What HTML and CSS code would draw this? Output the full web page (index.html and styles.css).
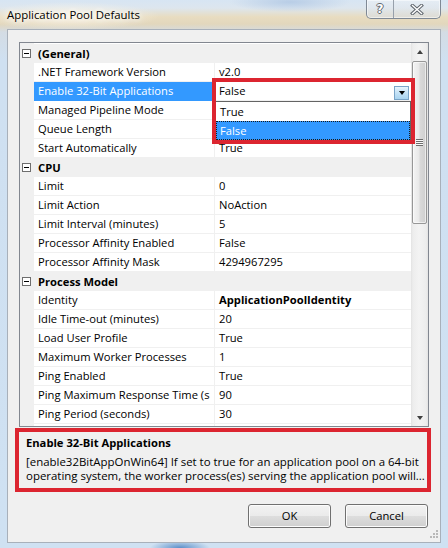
FILE: index.html
```html
<!DOCTYPE html>
<html>
<head>
<meta charset="utf-8">
<link rel="stylesheet" href="styles.css">
</head>
<body>
<div class="window">
  <div class="titlebar">
    <span class="title">Application Pool Defaults</span>
    <div class="caption">
      <div class="capbtn helpbtn"><span class="q">?</span></div>
      <div class="capbtn closebtn">
        <svg width="14" height="11" viewBox="0 0 14 11"><path d="M2.5 1.5 L11.5 9.5 M11.5 1.5 L2.5 9.5" stroke="#62686f" stroke-width="3.4" stroke-linecap="square" fill="none"/><path d="M2.5 1.5 L11.5 9.5 M11.5 1.5 L2.5 9.5" stroke="#ffffff" stroke-width="1.4" stroke-linecap="square" fill="none"/></svg>
      </div>
    </div>
  </div>
  <div class="client">
    <div class="grid">
      <div class="rows">
        <div class="row cat"><span class="box"></span>(General)</div>
        <div class="row"><span class="gut"></span><span class="name">.NET Framework Version</span><span class="val">v2.0</span></div>
        <div class="row sel"><span class="gut"></span><span class="name">Enable 32-Bit Applications</span><span class="val combo"><span class="ctext">False</span><span class="dropbtn"><span class="tri-down"></span></span></span></div>
        <div class="row"><span class="gut"></span><span class="name">Managed Pipeline Mode</span><span class="val"></span></div>
        <div class="row"><span class="gut"></span><span class="name">Queue Length</span><span class="val"></span></div>
        <div class="row"><span class="gut"></span><span class="name">Start Automatically</span><span class="val">True</span></div>
        <div class="row cat"><span class="box"></span>CPU</div>
        <div class="row"><span class="gut"></span><span class="name">Limit</span><span class="val">0</span></div>
        <div class="row"><span class="gut"></span><span class="name">Limit Action</span><span class="val">NoAction</span></div>
        <div class="row"><span class="gut"></span><span class="name">Limit Interval (minutes)</span><span class="val">5</span></div>
        <div class="row"><span class="gut"></span><span class="name">Processor Affinity Enabled</span><span class="val">False</span></div>
        <div class="row"><span class="gut"></span><span class="name">Processor Affinity Mask</span><span class="val">4294967295</span></div>
        <div class="row cat"><span class="box"></span>Process Model</div>
        <div class="row"><span class="gut"></span><span class="name">Identity</span><span class="val bold">ApplicationPoolIdentity</span></div>
        <div class="row"><span class="gut"></span><span class="name">Idle Time-out (minutes)</span><span class="val">20</span></div>
        <div class="row"><span class="gut"></span><span class="name">Load User Profile</span><span class="val">True</span></div>
        <div class="row"><span class="gut"></span><span class="name">Maximum Worker Processes</span><span class="val">1</span></div>
        <div class="row"><span class="gut"></span><span class="name">Ping Enabled</span><span class="val">True</span></div>
        <div class="row"><span class="gut"></span><span class="name">Ping Maximum Response Time (s</span><span class="val">90</span></div>
        <div class="row"><span class="gut"></span><span class="name">Ping Period (seconds)</span><span class="val">30</span></div>
        <div class="row"><span class="gut"></span><span class="name"></span><span class="val"></span></div>
      </div>
      <div class="sb">
        <div class="sb-btn"><span class="tri-up"></span></div>
        <div class="thumb"><span class="grip-lines"></span></div>
        <div class="track"></div>
        <div class="sb-btn"><span class="tri-down small"></span></div>
      </div>
      <div class="dropdown">
        <div class="item">True</div>
        <div class="item on">False</div>
      </div>
      <div class="mark"></div>
    </div>
    <div class="help">
      <div class="help-title">Enable 32-Bit Applications</div>
      <div class="help-desc">[enable32BitAppOnWin64] If set to true for an application pool on a 64-bit<br>operating system, the worker process(es) serving the application pool will...</div>
    </div>
    <div class="actions">
      <div class="btn">OK</div>
      <div class="btn">Cancel</div>
    </div>
    <svg class="sizegrip" width="11" height="11" viewBox="0 0 11 11">
      <g fill="#b8b8b8"><rect x="8" y="0" width="2" height="2"/><rect x="5" y="3" width="2" height="2"/><rect x="8" y="3" width="2" height="2"/><rect x="2" y="6" width="2" height="2"/><rect x="5" y="6" width="2" height="2"/><rect x="8" y="6" width="2" height="2"/></g>
    </svg>
  </div>
</div>
</body>
</html>
```

FILE: styles.css
```css
* { box-sizing: border-box; }
html, body { margin: 0; padding: 0; }
body {
  width: 448px;
  height: 548px;
  overflow: hidden;
  font-family: "Open Sans", "Noto Sans", sans-serif;
  font-size: 11.2px;
  color: #000;
  background:
    radial-gradient(ellipse 30px 8px at 180px 548px, #5c8fc8 0%, rgba(92,143,200,0) 100%),
    radial-gradient(ellipse 60px 10px at 290px 2px, #b8cde6 0%, rgba(184,205,230,0) 100%),
    radial-gradient(ellipse 90px 14px at 70px 16px, #fbf5e6 0%, rgba(251,245,230,0) 100%),
    linear-gradient(to bottom, #d7e5f3 0px, #dde6ee 8px, #e8dcc0 17px, #e2d7bd 24px, #d4dce4 32px, #cfe0f1 60px, #cfe1f2 100%);
}

.window {
  height: 548px;
  display: flex;
  flex-direction: column;
  padding: 0 7px 5px 7px;
}

.titlebar {
  height: 29px;
  flex-shrink: 0;
  display: flex;
  align-items: flex-start;
}
.title {
  margin-top: 6px;
  line-height: 18px;
  font-size: 11.4px;
  text-shadow: 0 0 5px #fffdf4, 0 0 9px #fffdf4, 0 0 12px #fffaf0;
}
.caption {
  margin-left: auto;
  display: flex;
  height: 19px;
  width: 75px;
  border: 1px solid #7f8995;
  border-top: 0;
  border-radius: 0 0 5px 5px;
  overflow: hidden;
  background: linear-gradient(to bottom, rgba(240,243,246,0.55), rgba(226,231,236,0.45) 50%, rgba(214,220,228,0.6));
  box-shadow: inset 0 0 0 1px rgba(255,255,255,0.5);
}
.capbtn {
  height: 18px;
  display: flex;
  align-items: center;
  justify-content: center;
}
.helpbtn {
  width: 27px;
  border-right: 1px solid #97a0ab;
}
.closebtn { flex: 1; }
.q {
  font-family: "DejaVu Sans", sans-serif;
  font-weight: bold;
  font-size: 12px;
  line-height: 14px;
  color: #ffffff;
  text-shadow: -1px 0 0 #62686f, 1px 0 0 #62686f, 0 -1px 0 #62686f, 0 1px 0 #62686f;
}

.client {
  flex: 1;
  position: relative;
  background: #f0f0f0;
  border: 1px solid #a8b0ba;
  padding: 12px 11px 0 11px;
  display: flex;
  flex-direction: column;
}

.grid {
  position: relative;
  height: 385px;
  flex-shrink: 0;
  display: flex;
  border: 1px solid #828790;
  background: #fff;
}
.rows {
  width: 391px;
  padding-top: 1px;
  overflow: hidden;
  background: linear-gradient(to right, #f0f0f0 14px, #fff 14px);
}
.row {
  display: grid;
  grid-template-columns: 14px 180px 197px;
  height: 19px;
}
.gut { background: #f0f0f0; }
.name, .val {
  padding-left: 4px;
  line-height: 18px;
  border-bottom: 1px solid #f0f0f0;
  white-space: nowrap;
  overflow: hidden;
}
.val { border-left: 1px solid #f0f0f0; }
.bold { font-weight: bold; }
.row.cat {
  display: flex;
  align-items: center;
  background: #f0f0f0;
  font-weight: bold;
  padding-left: 2px;
  line-height: 18px;
}
.box {
  width: 9px;
  height: 9px;
  border: 1px solid #6e6e6e;
  background: #fff;
  position: relative;
  margin-right: 7px;
  margin-top: -1px;
}
.box::after {
  content: "";
  position: absolute;
  left: 1px;
  top: 3px;
  width: 5px;
  height: 1px;
  background: #000;
}
.row.sel .name { background: #3399ff; color: #fff; border-bottom-color: #3399ff; }
.val.combo {
  display: flex;
  align-items: flex-end;
  padding-right: 2px;
}
.ctext { flex: 1; line-height: 18px; }
.dropbtn {
  width: 15px;
  height: 14px;
  border: 1px solid #7aa4c8;
  background: linear-gradient(to bottom, #e8f4fc, #c4e2f6 50%, #a9d4f0);
  display: flex;
  align-items: center;
  justify-content: center;
}
.tri-down {
  width: 0; height: 0;
  border-left: 3.5px solid transparent;
  border-right: 3.5px solid transparent;
  border-top: 4px solid #000;
}
.tri-down.small { border-top-color: #404040; }
.tri-up {
  width: 0; height: 0;
  border-left: 3.5px solid transparent;
  border-right: 3.5px solid transparent;
  border-bottom: 4px solid #404040;
}

.sb {
  width: 17px;
  display: flex;
  flex-direction: column;
  background: linear-gradient(to right, #e3e3e3 0, #ededed 2px, #f3f3f3 8px, #ededed 15px, #e3e3e3 17px);
}
.sb-btn {
  height: 17px;
  flex-shrink: 0;
  display: flex;
  align-items: center;
  justify-content: center;
}
.thumb {
  height: 163px;
  margin: 1px 1px 0 1px;
  flex-shrink: 0;
  border: 1px solid #979797;
  border-radius: 2px;
  background: linear-gradient(to right, #f4f4f4 0, #e9e9e9 45%, #d9d9d9 55%, #cfcfcf 100%);
  box-shadow: inset 0 0 0 1px rgba(255,255,255,0.6);
  display: flex;
  align-items: center;
  justify-content: center;
}
.grip-lines {
  width: 7px;
  height: 7px;
  background: repeating-linear-gradient(to bottom, #6d6d6d 0 1px, #fafafa 1px 2px);
}
.track { flex: 1; }

.dropdown {
  position: absolute;
  left: 195px;
  top: 58px;
  width: 196px;
  height: 40px;
  background: #fff;
  border: 1px solid #646464;
  z-index: 2;
}
.dropdown .item {
  height: 19px;
  line-height: 19px;
  padding-left: 4px;
}
.dropdown .item.on {
  background: #3399ff;
  color: #fff;
  outline: 1px dotted #1a1a1a;
  outline-offset: -1px;
}
.mark {
  position: absolute;
  left: 192px;
  top: 35px;
  width: 203px;
  height: 66px;
  border: 4px solid #dc2530;
  z-index: 3;
}

.help {
  margin: 1px -2px 0 -4px;
  height: 64px;
  flex-shrink: 0;
  border: 4px solid #dc2530;
  background: #f0f0f0;
  padding: 3px 2px 0 7px;
  white-space: nowrap;
}
.help-title {
  font-weight: bold;
  line-height: 15px;
}
.help-desc {
  margin-top: 5px;
  font-size: 11.45px;
  line-height: 13.5px;
}

.actions {
  margin-top: 12px;
  display: flex;
  justify-content: flex-end;
  gap: 14px;
  padding-right: 1px;
}
.btn {
  width: 83px;
  height: 24px;
  border: 1px solid #707070;
  border-radius: 3px;
  background: linear-gradient(to bottom, #f2f2f2 0, #ebebeb 48%, #dddddd 52%, #cfcfcf 100%);
  box-shadow: inset 0 0 0 1px #fcfcfc;
  display: flex;
  align-items: center;
  justify-content: center;
  line-height: 22px;
}
.sizegrip {
  position: absolute;
  right: 1px;
  bottom: 1px;
}
```
